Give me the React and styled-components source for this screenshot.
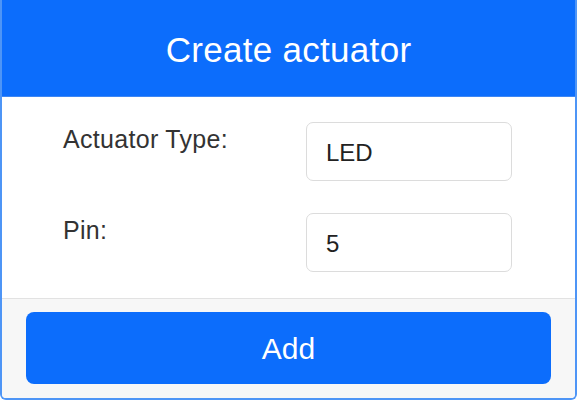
import React from "react";
import styled, { createGlobalStyle } from "styled-components";

const Global = createGlobalStyle`
  html, body { margin: 0; padding: 0; background: #ffffff; }
  body { font-family: "Liberation Sans", Arial, sans-serif; }
  * { box-sizing: border-box; }
`;

const Card = styled.div`
  width: 577px;
  height: 400px;
  display: flex;
  flex-direction: column;
  border: 2px solid #4e95f6;
  border-top: none;
  border-radius: 0 0 6px 6px;
  overflow: hidden;
  background: #ffffff;
`;

const Header = styled.header`
  height: 97px;
  margin: 0 -2px;
  padding-top: 3px;
  background: #0c6dfc;
  display: flex;
  align-items: center;
  justify-content: center;
  border-bottom: 1px solid #3d86f3;
`;

const Title = styled.h1`
  margin: 0;
  color: #ffffff;
  font-weight: 400;
  font-size: 35px;
  letter-spacing: 0.3px;
`;

const Body = styled.div`
  display: grid;
  grid-template-columns: 243px 206px;
  row-gap: 32px;
  padding: 25px 0 26px 61px;
`;

const Label = styled.label`
  font-size: 25px;
  letter-spacing: 0.3px;
  color: #333333;
  padding-top: 3px;
  line-height: 28px;
`;

const Field = styled.div`
  height: 59px;
  border: 1.5px solid #dcdcdc;
  border-radius: 7px;
  display: flex;
  align-items: center;
  padding-left: 19px;
  font-size: 24px;
  color: #222222;
  padding-top: 2px;
`;

const Footer = styled.footer`
  flex: 1;
  background: #f7f7f7;
  border-top: 1.5px solid #e2e2e2;
  padding: 13px 24px 13px 24px;
  display: flex;
`;

const Button = styled.button`
  flex: 1;
  height: 72px;
  border: none;
  border-radius: 8px;
  background: #0c6dfc;
  color: #ffffff;
  font-family: "Liberation Sans", Arial, sans-serif;
  font-size: 30px;
  padding-top: 3px;
  cursor: pointer;
`;

export default function App() {
  return (
    <>
      <Global />
      <Card>
        <Header>
          <Title>Create actuator</Title>
        </Header>
        <Body>
          <Label>Actuator Type:</Label>
          <Field>LED</Field>
          <Label>Pin:</Label>
          <Field>5</Field>
        </Body>
        <Footer>
          <Button>Add</Button>
        </Footer>
      </Card>
    </>
  );
}
